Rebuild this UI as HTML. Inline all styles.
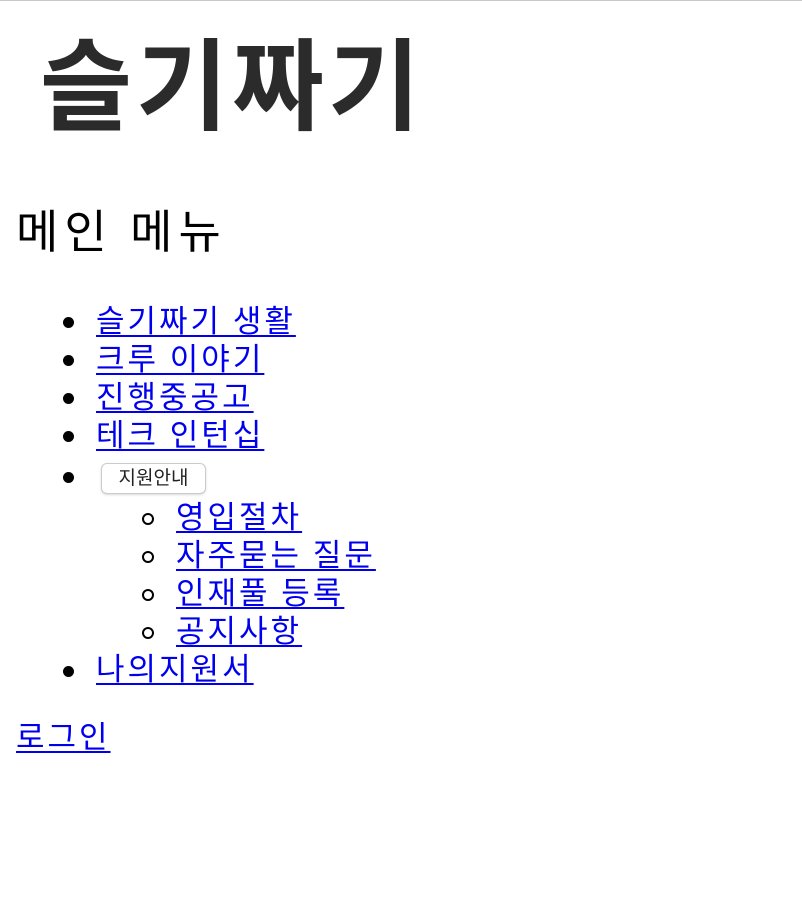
<!DOCTYPE html>
<html><head><meta charset="utf-8"><style>
html,body{margin:0;padding:0;background:#fff;}
body{width:802px;height:907px;position:relative;overflow:hidden;border-top:1px solid #c8c8c8;box-sizing:border-box;font-family:"Liberation Serif","Noto Sans CJK KR",serif;}
.logo{position:absolute;left:40px;top:22px;font-family:"Liberation Sans","Noto Sans CJK KR",sans-serif;font-weight:700;font-size:100px;line-height:130px;color:#2b2b2b;letter-spacing:4px;}
h2{position:absolute;left:16px;top:204px;margin:0;font-size:46px;font-weight:400;line-height:55px;color:#000;letter-spacing:6px;}
.item{position:absolute;font-size:31px;line-height:38px;height:38px;white-space:nowrap;letter-spacing:3px;}
.item a{color:#0000ee;text-decoration:underline;text-decoration-thickness:2px;text-underline-offset:3px;}
.dot{position:absolute;width:11px;height:11px;border-radius:50%;background:#000;}
.circ{position:absolute;width:8px;height:8px;border-radius:50%;border:2px solid #000;}
.btn{position:absolute;left:101px;top:462px;width:105px;height:31px;border:1px solid #ccc;border-radius:6px;background:#fff;box-shadow:0 1px 2px rgba(0,0,0,.15);font-family:"Liberation Sans","Noto Sans CJK KR",sans-serif;font-size:19px;line-height:29px;text-align:center;color:#222;box-sizing:border-box;}
</style></head><body>
<div class="logo">슬기짜기</div>
<h2>메인 메뉴</h2>
<span class="dot" style="left:63px;top:316px"></span><div class="item" style="left:96px;top:302px"><a>슬기짜기 생활</a></div>
<span class="dot" style="left:63px;top:354px"></span><div class="item" style="left:96px;top:340px"><a>크루 이야기</a></div>
<span class="dot" style="left:63px;top:392px"></span><div class="item" style="left:96px;top:378px"><a>진행중공고</a></div>
<span class="dot" style="left:63px;top:430px"></span><div class="item" style="left:96px;top:416px"><a>테크 인턴십</a></div>
<span class="dot" style="left:63px;top:471px"></span><div class="btn">지원안내</div>
<span class="circ" style="left:142px;top:512px"></span><div class="item" style="left:176px;top:498px"><a>영입절차</a></div>
<span class="circ" style="left:142px;top:550px"></span><div class="item" style="left:176px;top:536px"><a>자주묻는 질문</a></div>
<span class="circ" style="left:142px;top:588px"></span><div class="item" style="left:176px;top:574px"><a>인재풀 등록</a></div>
<span class="circ" style="left:142px;top:626px"></span><div class="item" style="left:176px;top:612px"><a>공지사항</a></div>
<span class="dot" style="left:63px;top:665px"></span><div class="item" style="left:96px;top:650px"><a>나의지원서</a></div>
<div class="item" style="left:16px;top:718px"><a>로그인</a></div>
</body></html>
